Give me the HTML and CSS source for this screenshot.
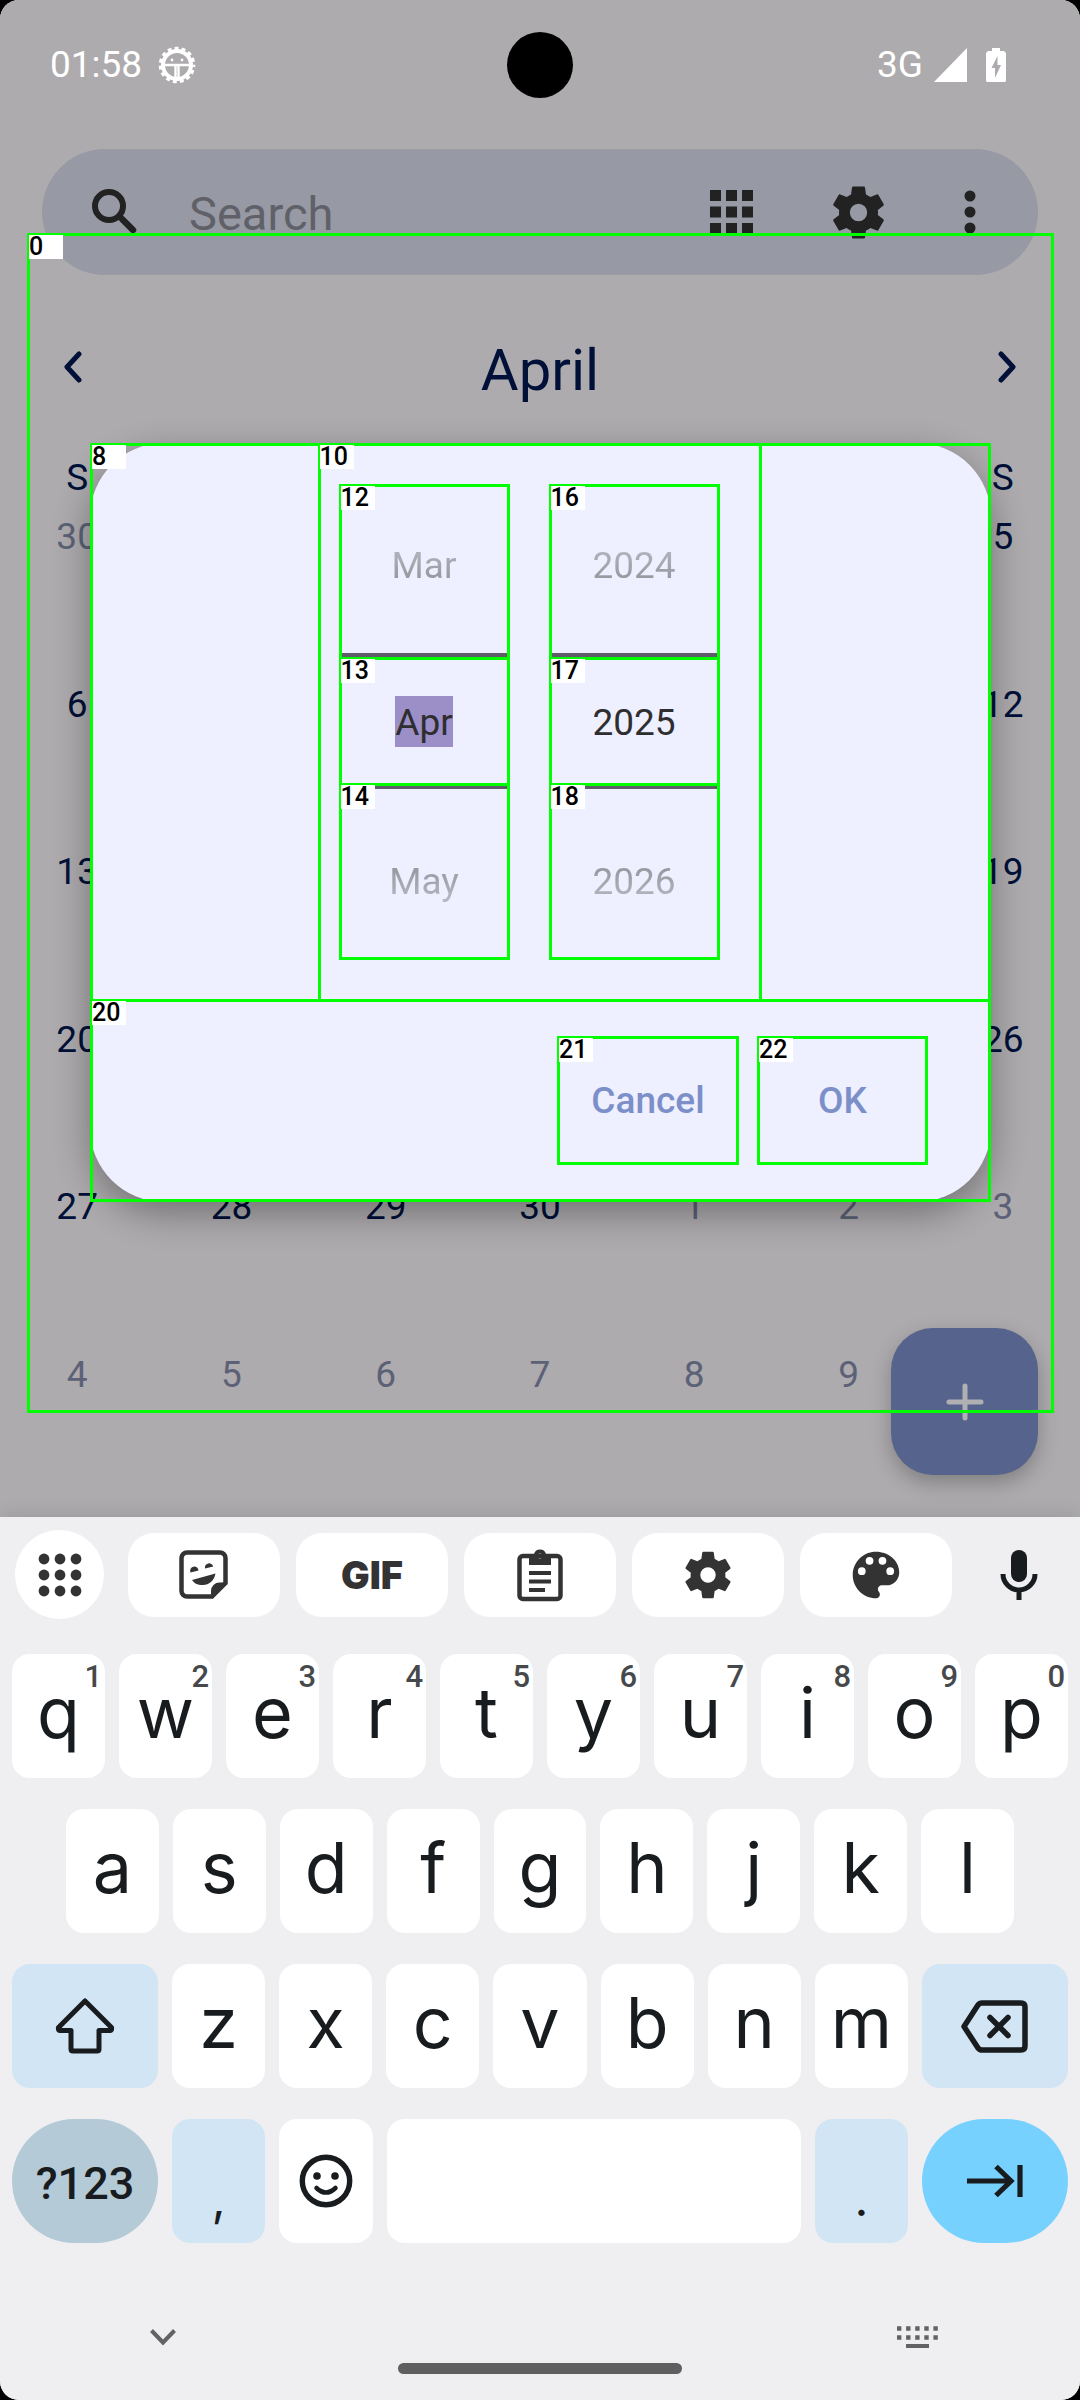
FILE: index.html
```html
<!DOCTYPE html>
<html lang="en">
<head>
<meta charset="utf-8">
<meta name="viewport" content="width=device-width, initial-scale=1">
<title>Calendar</title>
<link rel="stylesheet" href="styles.css">
</head>
<body>
<svg class="defs" width="0" height="0" aria-hidden="true">
  <symbol id="gear" viewBox="0 0 24 24"><path d="M19.14 12.94c.04-.3.06-.61.06-.94 0-.32-.02-.64-.07-.94l2.03-1.58c.18-.14.23-.41.12-.61l-1.92-3.32c-.12-.22-.37-.29-.59-.22l-2.39.96c-.5-.38-1.03-.7-1.62-.94l-.36-2.54c-.04-.24-.24-.41-.48-.41h-3.84c-.24 0-.43.17-.47.41l-.36 2.54c-.59.24-1.13.57-1.62.94l-2.39-.96c-.22-.08-.47 0-.59.22L2.74 8.87c-.12.21-.08.47.12.61l2.03 1.58c-.05.3-.09.63-.09.94s.02.64.07.94l-2.03 1.58c-.18.14-.23.41-.12.61l1.92 3.32c.12.22.37.29.59.22l2.39-.96c.5.38 1.03.7 1.62.94l.36 2.54c.05.24.24.41.48.41h3.84c.24 0 .44-.17.47-.41l.36-2.54c.59-.24 1.13-.56 1.62-.94l2.39.96c.22.08.47 0 .59-.22l1.92-3.32c.12-.22.07-.47-.12-.61l-2.01-1.58zM12 15.2a3.2 3.2 0 1 1 0-6.4 3.2 3.2 0 0 1 0 6.4z"/></symbol>
</svg>
<div class="phone">
  <main class="app">
    <header class="status">
      <span class="status-left">01:58
        <svg width="38" height="38" viewBox="-19 -19 38 38"><circle r="14" fill="none" stroke="#fff" stroke-width="4"/><circle r="16.5" fill="none" stroke="#fff" stroke-width="3.6" stroke-dasharray="3.9 3.077" stroke-dashoffset="1.9"/><path d="M-14 0H14M-1.5 0V14M1.5 0V14" stroke="#fff" stroke-width="2.4" fill="none"/><circle cx="-5" cy="-5" r="1.4" fill="#fff"/><circle cx="5" cy="-5" r="1.4" fill="#fff"/></svg>
      </span>
      <span class="camera"></span>
      <span class="status-right">3G
        <svg width="33" height="34" viewBox="0 0 33 34"><path fill="#fff" d="M33 0V34H0z"/></svg>
        <svg class="battery" width="20" height="34" viewBox="0 0 20 34"><path fill="#fff" fill-rule="evenodd" d="M6 0h8v3h4l2 2v28l-1 1H1l-1-1V5l2-2h4zM11.500 8L5.500 20H9v10l6-13h-3.500z"/></svg>
      </span>
    </header>

    <form class="search" role="search">
      <svg width="46" height="46" viewBox="0 0 46 46" fill="none" stroke="#222" stroke-width="6"><circle cx="17" cy="17" r="14"/><path d="M30 30L41 41" stroke-width="6.500" stroke-linecap="round"/></svg>
      <input class="search-input" type="search" placeholder="Search" aria-label="Search">
      <button class="tool" type="button" aria-label="Change view"><svg width="43" height="44" viewBox="0 0 43 44" fill="#222"><path d="M0 0h11v11H0zM16 0h11v11H16zM32 0h11v11H32zM0 16.500h11v11H0zM16 16.500h11v11H16zM32 16.500h11v11H32zM0 33h11v11H0zM16 33h11v11H16zM32 33h11v11H32z"/></svg></button>
      <button class="tool" type="button" aria-label="Settings"><svg width="65" height="65" fill="#222"><use href="#gear"/></svg></button>
      <button class="tool" type="button" aria-label="More options"><svg width="12" height="44" viewBox="0 0 12 44" fill="#222"><circle cx="6" cy="6" r="5.500"/><circle cx="6" cy="22" r="5.500"/><circle cx="6" cy="38" r="5.500"/></svg></button>
    </form>

    <div class="month">
      <button class="tool" type="button" aria-label="Previous month"><svg width="18" height="32" viewBox="0 0 18 32" fill="none" stroke="#001038" stroke-width="5" stroke-linecap="round" stroke-linejoin="round"><path d="M15 3L3 16 15 29"/></svg></button>
      <h1 class="month-name">April</h1>
      <button class="tool" type="button" aria-label="Next month"><svg width="18" height="32" viewBox="0 0 18 32" fill="none" stroke="#001038" stroke-width="5" stroke-linecap="round" stroke-linejoin="round"><path d="M3 3L15 16 3 29"/></svg></button>
    </div>

    <table class="days">
      <thead><tr><th>S</th><th>M</th><th>T</th><th>W</th><th>T</th><th>F</th><th>S</th></tr></thead>
      <tbody>
        <tr><td class="other">30</td><td class="other">31</td><td>1</td><td>2</td><td>3</td><td>4</td><td>5</td></tr>
        <tr><td>6</td><td>7</td><td>8</td><td>9</td><td>10</td><td>11</td><td>12</td></tr>
        <tr><td>13</td><td>14</td><td>15</td><td>16</td><td>17</td><td>18</td><td>19</td></tr>
        <tr><td>20</td><td>21</td><td>22</td><td>23</td><td>24</td><td>25</td><td>26</td></tr>
        <tr><td>27</td><td>28</td><td>29</td><td>30</td><td class="other">1</td><td class="other">2</td><td class="other">3</td></tr>
        <tr><td class="other">4</td><td class="other">5</td><td class="other">6</td><td class="other">7</td><td class="other">8</td><td class="other">9</td><td class="other">10</td></tr>
      </tbody>
    </table>

    <button class="fab" type="button" aria-label="New event"><svg width="38" height="38" viewBox="0 0 38 38" fill="none" stroke="#b0afb2" stroke-width="5" stroke-linecap="round"><path d="M19 3V35M3 19H35"/></svg></button>

    <div class="pager mark"><span class="tag">0</span></div>

    <div class="modal-layer">
      <div class="dialog mark" role="dialog" aria-label="Pick a month">
        <div class="sheet">
          <div class="dialog-body">
            <div class="pickers mark">
              <div class="picker">
                <button class="prev mark" type="button"><span class="tag">12</span><span class="fade-in">Mar</span></button>
                <div class="current mark"><span class="tag">13</span><input class="value selected" value="Apr" aria-label="Month"></div>
                <button class="next mark" type="button"><span class="tag">14</span><span class="fade-out">May</span></button>
              </div>
              <div class="picker">
                <button class="prev mark" type="button"><span class="tag">16</span><span class="fade-in">2024</span></button>
                <div class="current mark"><span class="tag">17</span><input class="value" value="2025" aria-label="Year"></div>
                <button class="next mark" type="button"><span class="tag">18</span><span class="fade-out">2026</span></button>
              </div>
              <span class="tag">10</span>
            </div>
          </div>
          <div class="actions mark">
            <span class="tag">20</span>
            <button class="action wide mark" type="button"><span class="tag">21</span>Cancel</button>
            <button class="action mark" type="button"><span class="tag">22</span>OK</button>
          </div>
        </div>
        <span class="tag">8</span>
      </div>
    </div>
  </main>

  <section class="keyboard" aria-label="Keyboard">
    <div class="strip">
      <button class="round" type="button" aria-label="All tools"><svg width="44" height="44" viewBox="0 0 44 44" fill="#333"><circle cx="6" cy="6" r="5.400"/><circle cx="22" cy="6" r="5.400"/><circle cx="38" cy="6" r="5.400"/><circle cx="6" cy="22" r="5.400"/><circle cx="22" cy="22" r="5.400"/><circle cx="38" cy="22" r="5.400"/><circle cx="6" cy="38" r="5.400"/><circle cx="22" cy="38" r="5.400"/><circle cx="38" cy="38" r="5.400"/></svg></button>
      <div class="pills">
        <button class="pill" type="button" aria-label="Stickers"><svg width="50" height="50" viewBox="0 0 50 50"><path d="M8 2.500H41a5.500 5.500 0 0 1 5.500 5.500V33L33 46.500H8A5.500 5.500 0 0 1 2.500 41V8A5.500 5.500 0 0 1 8 2.500z" fill="none" stroke="#333" stroke-width="4.500"/><path fill="#333" d="M32 48V41a8.500 8.500 0 0 1 8.500-8.500H48.500L34 48.500zM11.500 22.500a4.200 4.200 0 1 1 8-2zM26 18.500a4.200 4.200 0 1 1 8.200-2zM13 30L36.500 23.500C35 31 30 35 24 35S15 33 13 30z"/></svg></button>
        <button class="pill gif" type="button">GIF</button>
        <button class="pill" type="button" aria-label="Clipboard"><svg width="46" height="54" viewBox="0 0 46 54" fill="none" stroke="#333"><rect x="2.500" y="8" width="41" height="43" rx="3.500" stroke-width="4.500"/><path fill="#333" stroke="none" fill-rule="evenodd" d="M12 6h5a6.300 6.300 0 0 1 12 0h5v11H12zM23 5.500a2.500 2.500 0 1 0 0 5 2.500 2.500 0 0 0 0-5z"/><path d="M12 25H34M12 33.500H34M12 42H28" stroke-width="4"/></svg></button>
        <button class="pill" type="button" aria-label="Keyboard settings"><svg width="58" height="60" fill="#333"><use href="#gear"/></svg></button>
        <button class="pill" type="button" aria-label="Themes"><svg width="62" height="62" viewBox="0 0 24 24" fill="#333"><path d="M12 3c-4.970 0-9 4.030-9 9s4.030 9 9 9c.830 0 1.500-.670 1.500-1.500 0-.390-.150-.740-.390-1.010-.230-.260-.380-.610-.380-.990 0-.830.670-1.500 1.500-1.500H16c2.760 0 5-2.240 5-5 0-4.420-4.030-8-9-8zm-5.500 9a1.500 1.500 0 1 1 0-3 1.500 1.500 0 0 1 0 3zm3-4a1.500 1.500 0 1 1 0-3 1.500 1.500 0 0 1 0 3zm5 0a1.500 1.500 0 1 1 0-3 1.500 1.500 0 0 1 0 3zm3 4a1.500 1.500 0 1 1 0-3 1.500 1.500 0 0 1 0 3z"/></svg></button>
      </div>
      <button class="mic" type="button" aria-label="Voice typing"><svg width="38" height="52" viewBox="0 0 38 52"><rect x="11" y="1" width="16" height="32" rx="8" fill="#181c1e"/><path d="M3 25a16 16 0 0 0 32 0M19 41V51" fill="none" stroke="#181c1e" stroke-width="5"/></svg></button>
    </div>
    <div class="rows">
      <div class="row">
        <button class="key" type="button">q<sup class="hint">1</sup></button><button class="key" type="button">w<sup class="hint">2</sup></button><button class="key" type="button">e<sup class="hint">3</sup></button><button class="key" type="button">r<sup class="hint">4</sup></button><button class="key" type="button">t<sup class="hint">5</sup></button><button class="key" type="button">y<sup class="hint">6</sup></button><button class="key" type="button">u<sup class="hint">7</sup></button><button class="key" type="button">i<sup class="hint">8</sup></button><button class="key" type="button">o<sup class="hint">9</sup></button><button class="key" type="button">p<sup class="hint">0</sup></button>
      </div>
      <div class="row inset">
        <button class="key" type="button">a</button><button class="key" type="button">s</button><button class="key" type="button">d</button><button class="key" type="button">f</button><button class="key" type="button">g</button><button class="key" type="button">h</button><button class="key" type="button">j</button><button class="key" type="button">k</button><button class="key" type="button">l</button>
      </div>
      <div class="row">
        <button class="key side tint icon" type="button" aria-label="Shift"><svg width="62" height="62" viewBox="0 0 62 62" fill="none" stroke="#181c1e" stroke-width="5" stroke-linejoin="round"><path d="M31 6L4.500 32.500Q4 35 6 35.500H17V54Q17 56 19 56H43Q45 56 45 54V35.500H56Q58 35 57.500 32.500z"/></svg></button><button class="key" type="button">z</button><button class="key" type="button">x</button><button class="key" type="button">c</button><button class="key" type="button">v</button><button class="key" type="button">b</button><button class="key" type="button">n</button><button class="key" type="button">m</button><button class="key side tint icon" type="button" aria-label="Backspace"><svg width="72" height="57" viewBox="0 0 72 57" fill="none" stroke="#181c1e" stroke-width="5.500" stroke-linecap="round" stroke-linejoin="round"><path d="M5 28.500L19 7Q20.500 5 23 5H62Q66 5 66 9V48Q66 52 62 52H23Q20.500 52 19 50zM31 19.500L49 37.500M49 19.500L31 37.500"/></svg></button>
      </div>
      <div class="row">
        <button class="key side symbols" type="button">?123</button><button class="key tint punct" type="button">,</button><button class="key icon" type="button" aria-label="Emoji"><svg width="54" height="54" viewBox="-27 -27 54 54"><circle r="23.700" fill="none" stroke="#181c1e" stroke-width="5.400"/><circle cx="-9" cy="-5" r="3.800" fill="#181c1e"/><circle cx="9" cy="-5" r="3.800" fill="#181c1e"/><path d="M-9.500 7Q0 16 9.500 7" fill="none" stroke="#181c1e" stroke-width="4.500" stroke-linecap="round"/></svg></button><button class="key space" type="button" aria-label="Space"></button><button class="key tint punct" type="button">.</button><button class="key side enter icon" type="button" aria-label="Next field"><svg width="60" height="38" viewBox="0 0 60 38" fill="none" stroke="#181c1e" stroke-width="5.200"><path d="M2 19H46M31 4.500L46 19 31 33.500M55 3V35"/></svg></button>
      </div>
    </div>
    <nav class="nav">
      <button class="tool" type="button" aria-label="Hide keyboard"><svg width="26" height="18" viewBox="0 0 26 18" fill="none" stroke="#636363" stroke-width="4"><path d="M1.500 2.500L13 14.500 24.500 2.500"/></svg></button>
      <button class="tool" type="button" aria-label="Switch keyboard"><svg width="41" height="22" viewBox="0 0 41 22" fill="none" stroke="#636363"><path d="M0 2.500H41M0 11.500H41" stroke-width="4.500" stroke-dasharray="4.400 4.700"/><path d="M9 20H32" stroke-width="4"/></svg></button>
    </nav>
    <div class="home-bar"></div>
  </section>
</div>
</body>
</html>
```
FILE: styles.css
```css
*, *::before, *::after { box-sizing: border-box; }
body {
  margin: 0;
  background: #000;
  font-family: Roboto, "Liberation Sans", sans-serif;
  font-size: 37px;
  line-height: 50px;
}
button, input {
  margin: 0;
  padding: 0;
  border: 0;
  background: none;
  color: inherit;
  font: inherit;
}
svg { display: block; }
.defs { position: absolute; }

.phone {
  display: flex;
  flex-direction: column;
  min-height: 100vh;
  border-radius: 19px;
  overflow: hidden;
  background: #efeff1;
}
.app {
  position: relative;
  flex: 1;
  background: #adabad;
  color: #001038;
}

/* Status bar */
.status {
  display: grid;
  grid-template-columns: 1fr auto 1fr;
  align-items: center;
  height: 128px;
  padding: 2px 74px 0 50px;
  color: #fff;
}
.status-left, .status-right { display: flex; align-items: center; gap: 16px; }
.status-right { justify-content: flex-end; gap: 11px; }
.battery { margin-left: 8px; }
.camera {
  width: 66px;
  height: 66px;
  margin-left: 24px;
  border-radius: 50%;
  background: #000;
}

/* Search bar */
.search {
  display: flex;
  align-items: center;
  height: 126px;
  margin: 21px 42px 0;
  padding: 0 62px 0 50px;
  border-radius: 63px;
  background: #9799a4;
}
.search-input {
  flex: 1;
  min-width: 0;
  margin-left: 51px;
  padding-top: 3px;
  font-size: 47px;
  line-height: 60px;
}
.search-input::placeholder { color: #606168; opacity: 1; }
.tool { display: flex; align-items: center; justify-content: center; flex: none; }
.search .tool + .tool { margin-left: 73px; }

/* Month heading */
.month {
  display: flex;
  align-items: center;
  justify-content: space-between;
  height: 100px;
  margin-top: 42px;
  padding: 0 64px;
}
.month-name { margin: 0; padding-top: 5px; font-size: 58px; font-weight: 400; line-height: 70px; }

/* Day grid */
.days {
  width: 100%;
  margin-top: 36px;
  border-collapse: collapse;
  table-layout: fixed;
}
.days th, .days td { padding: 0; font-weight: 400; text-align: center; vertical-align: top; }
.days thead tr { height: 59px; }
.days tbody tr { height: 167px; }
.days tbody tr:nth-child(odd) { height: 168px; }
.days .other { color: #5c6177; }

.fab {
  position: absolute;
  right: 42px;
  bottom: 42px;
  display: flex;
  align-items: center;
  justify-content: center;
  width: 147px;
  height: 147px;
  border-radius: 42px;
  background: #56638c;
  box-shadow: 0 8px 20px rgba(0, 0, 0, .25);
}

/* Numbered element outlines */
.mark { position: relative; }
.mark::after {
  content: "";
  position: absolute;
  inset: 0;
  border: 3px solid #0f0;
  pointer-events: none;
}
.tag {
  position: absolute;
  top: 2px;
  left: 2px;
  z-index: 1;
  width: 34px;
  height: 24px;
  background: #fff;
  color: #000;
  font-size: 25px;
  font-weight: 500;
  line-height: 24px;
  text-align: left;
}
.pager {
  position: absolute;
  inset: 233px 26px 104px 27px;
  pointer-events: none;
}

/* Month picker dialog */
.modal-layer {
  position: absolute;
  inset: 128px 0 0;
  display: flex;
  align-items: center;
  padding: 0 89px 0 90px;
}
.dialog { flex: 1; }
.sheet {
  border-radius: 74px;
  background: #eeefff;
  box-shadow: 0 12px 36px rgba(0, 0, 0, .33);
}
.dialog-body { display: flex; justify-content: center; padding-right: 2px; }
.pickers { display: flex; gap: 39px; padding: 41px 42px 42px 21px; }
.picker { display: flex; flex-direction: column; width: 171px; }
.prev, .next { display: block; width: 100%; text-align: center; }
.prev { height: 176px; padding-bottom: 13px; background: linear-gradient(#5f5b69, #5f5b69) 0 169px / 100% 4px no-repeat; }
.next { height: 177px; margin-top: -3px; padding-top: 21px; background: linear-gradient(#5f5b69, #5f5b69) 0 3px / 100% 3px no-repeat; }
.current {
  display: flex;
  align-items: center;
  justify-content: center;
  height: 129px;
  margin-top: -3px;
  color: #2e2e30;
}
.value { width: 100px; height: 51px; padding-top: 2px; text-align: center; outline: 0; }
.selected { width: 58px; background: #9c8fc8; }
.fade-in, .fade-out { background: linear-gradient(#b8b9c3, #909196); background-clip: text; -webkit-background-clip: text; color: transparent; }
.fade-out { background-image: linear-gradient(#909196, #b8b9c3); }

.actions {
  display: flex;
  justify-content: flex-end;
  gap: 18px;
  margin-top: -3px;
  padding: 37px 63px;
}
.action { width: 171px; height: 129px; color: #7c8fc9; font-weight: 500; }
.wide { width: 182px; }

/* Keyboard */
.keyboard {
  position: relative;
  padding-top: 13px;
  background: #efeff1;
  box-shadow: 0 0 20px rgba(0, 0, 0, .12);
  color: #181c1e;
}
.strip {
  display: flex;
  align-items: center;
  gap: 24px;
  padding: 0 10px 0 15px;
}
.round, .pill, .mic, .key { display: flex; align-items: center; justify-content: center; }
.round { width: 89px; height: 89px; border-radius: 50%; background: #fff; }
.pills { display: flex; flex: 1; gap: 16px; }
.pill { flex: 1; height: 84px; border-radius: 26px; background: #fff; }
.gif { color: #333; font-family: Inter, Roboto, sans-serif; font-size: 38px; font-weight: 900; }
.mic { width: 94px; height: 84px; padding-right: 8px; }
.rows { display: flex; flex-direction: column; gap: 31px; padding: 35px 12px 0; }
.row { display: flex; gap: 14px; }
.inset { padding: 0 54px; }
.key {
  position: relative;
  flex: 1 1 0;
  height: 124px;
  padding-bottom: 6px;
  border-radius: 18px;
  background: #fff;
  font-family: Inter, Roboto, sans-serif;
  font-size: 70px;
  line-height: 84px;
}
.icon { padding-bottom: 0; }
.hint {
  position: absolute;
  top: 5px;
  right: 3px;
  color: #46494b;
  font-family: Roboto, sans-serif;
  font-size: 31px;
  font-weight: 500;
  line-height: 36px;
}
.side { flex: 0 0 146px; }
.tint { background: #d2e5f4; }
.symbols {
  padding: 5px 0 0;
  border-radius: 62px;
  background: #b4cad7;
  font-family: Roboto, sans-serif;
  font-size: 45px;
  font-weight: 500;
}
.punct { align-items: flex-end; padding-bottom: 14px; font-size: 48px; line-height: 60px; }
.space { flex: 0 1 414px; }
.enter { border-radius: 62px; background: #77d1ff; }

.nav {
  display: flex;
  align-items: center;
  justify-content: space-between;
  height: 22px;
  margin-top: 83px;
  padding: 0 142px 0 150px;
}
.home-bar {
  width: 284px;
  height: 11px;
  margin: 15px auto 26px;
  border-radius: 6px;
  background: #5f5f5f;
}
```
